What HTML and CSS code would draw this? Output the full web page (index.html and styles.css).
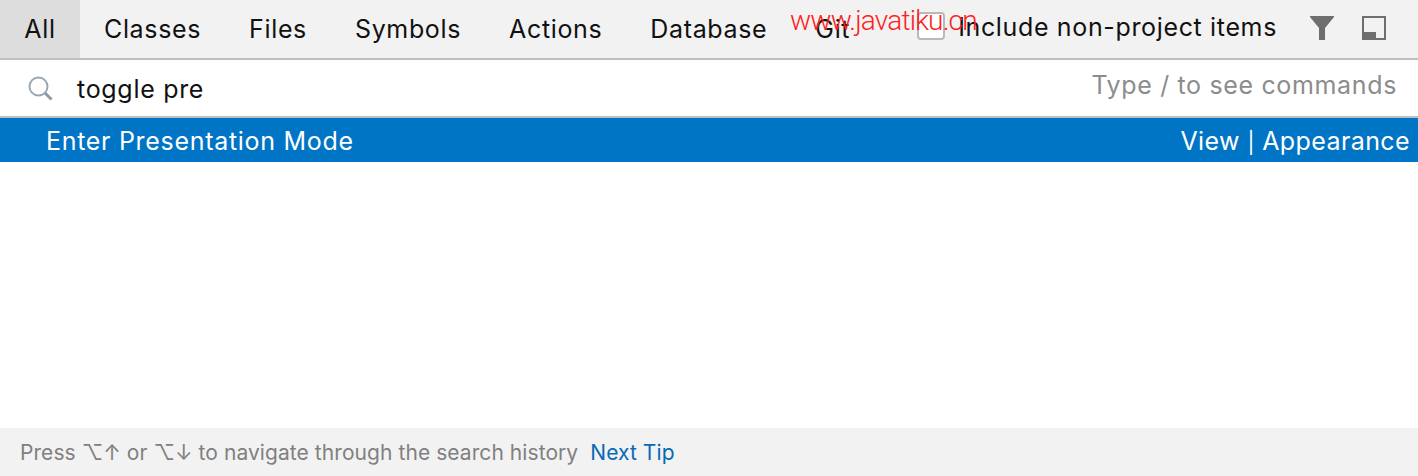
FILE: index.html
```html
<!DOCTYPE html>
<html lang="en">
<head>
<meta charset="utf-8">
<title>Search Everywhere</title>
<link rel="stylesheet" href="styles.css">
</head>
<body>
<div class="popup">
  <header class="toolbar">
    <nav class="tabs">
      <span class="tab active">All</span>
      <span class="tab">Classes</span>
      <span class="tab">Files</span>
      <span class="tab">Symbols</span>
      <span class="tab">Actions</span>
      <span class="tab">Database</span>
      <span class="tab">Git</span>
    </nav>
    <div class="tools">
      <label class="include"><span class="checkbox"></span><span>Include non-project items</span></label>
      <svg class="icon filter" width="24" height="24" viewBox="0 0 24 24"><path d="M0 0H24V1L15 12V24H9V12L0 1Z" fill="#6e6e6e"/></svg>
      <svg class="icon preview" width="24" height="24" viewBox="0 0 24 24"><rect x="1" y="1" width="22" height="22" fill="none" stroke="#6e6e6e" stroke-width="2"/><rect x="0" y="16" width="14" height="8" fill="#6e6e6e"/></svg>
    </div>
  </header>
  <div class="search">
    <svg class="search-icon" width="25" height="25" viewBox="0 0 25 25"><circle cx="10.5" cy="10.5" r="9" fill="none" stroke="#9aa7b0" stroke-width="2"/><path d="M17 17L23.5 23.5" stroke="#8c9aa4" stroke-width="3"/></svg>
    <span class="query">toggle pre</span>
    <span class="hint">Type / to see commands</span>
  </div>
  <div class="result">
    <span class="result-name">Enter Presentation Mode</span>
    <span class="result-path">View <span class="sep">|</span> Appearance</span>
  </div>
  <main class="empty"></main>
  <footer class="footer">
    <span>Press <span class="keys">⌥↑</span> or <span class="keys">⌥↓</span> to navigate through the search history</span>
    <a class="tip">Next Tip</a>
  </footer>
  <div class="watermark">www.javatiku.cn</div>
</div>
</body>
</html>
```
FILE: styles.css
```css
* { box-sizing: border-box; }
html, body { margin: 0; padding: 0; background: #fff; }
body { width: 1418px; height: 476px; overflow: hidden; font-family: Inter, "Liberation Sans", sans-serif; }
.popup { position: relative; display: flex; flex-direction: column; height: 476px; }
.toolbar { display: flex; justify-content: space-between; height: 60px; background: #f2f2f2; border-bottom: 2px solid #c0c0c0; }
.tabs { display: flex; }
.tab { display: flex; align-items: center; padding: 0 24px; font-size: 25px; letter-spacing: 0.65px; color: #111; }
.tab.active { width: 80px; justify-content: center; background: #dddddd; }
.tools { display: flex; align-items: center; padding-right: 32px; }
.include { display: flex; align-items: center; gap: 13px; font-size: 25px; letter-spacing: 0.65px; color: #111; margin-right: 33px; margin-bottom: 4px; }
.checkbox { width: 28px; height: 28px; background: #fff; border: 2px solid #b9b9b9; border-radius: 4px; margin-bottom: 2px; }
.icon { display: block; margin-bottom: 2px; }
.filter { margin-right: 28px; }
.search { display: flex; align-items: center; height: 58px; border-bottom: 2px solid #c0c0c0; padding: 0 21px 0 28px; }
.search-icon { margin-right: 24px; }
.query { padding-top: 2px; font-size: 25px; letter-spacing: 0.7px; color: #111; }
.hint { margin-left: auto; margin-bottom: 6px; font-size: 25px; letter-spacing: 0.65px; color: #8c8c8c; }
.result { display: flex; justify-content: space-between; align-items: center; height: 44px; padding: 1px 8px 0 46px; background: #0074c5; color: #fff; font-size: 25px; }
.result-name { letter-spacing: 0.7px; }
.result-path { letter-spacing: 0.4px; }
.sep { font-size: 21px; }
.empty { flex: 1; }
.footer { display: flex; align-items: center; gap: 12px; height: 48px; background: #f2f2f2; padding-left: 20px; font-size: 21px; letter-spacing: 0.07px; color: #808080; }
.tip { color: #0869b4; }
.watermark { position: absolute; left: 790px; top: 4px; font-family: Roboto, "Liberation Sans", sans-serif; font-size: 28px; font-weight: 300; letter-spacing: -0.8px; color: #ff2020; }
```
